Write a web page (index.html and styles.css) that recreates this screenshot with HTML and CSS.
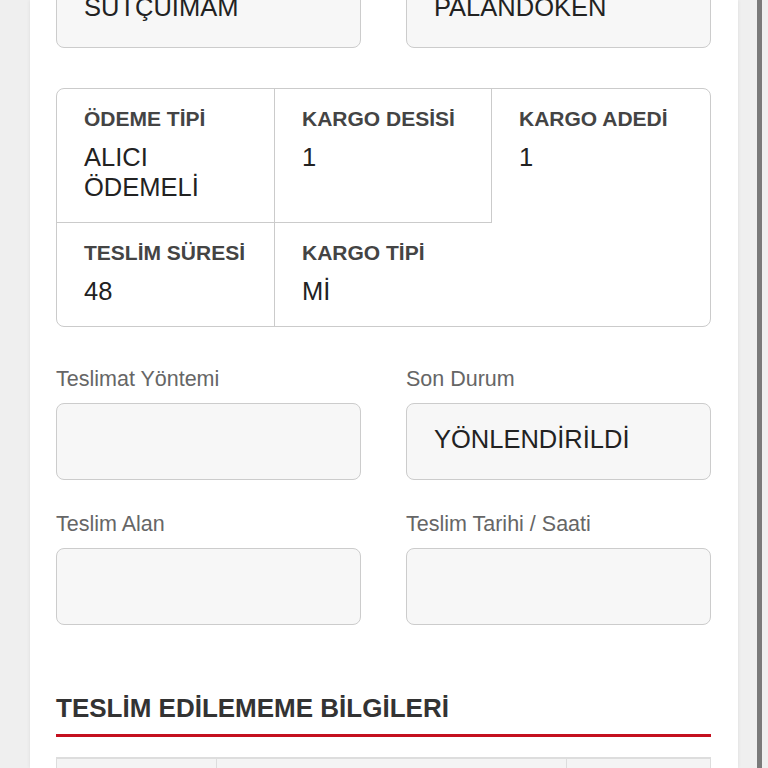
FILE: index.html
```html
<!DOCTYPE html>
<html lang="tr">
<head>
<meta charset="utf-8">
<title>Kargo Takip</title>
<link rel="stylesheet" href="styles.css">
</head>
<body>
<div class="page">
  <div class="gutter-left"></div>
  <main class="panel">
    <div class="row top-row">
      <div class="field">
        <div class="input">SUTÇUIMAM</div>
      </div>
      <div class="field">
        <div class="input">PALANDOKEN</div>
      </div>
    </div>

    <div class="card">
      <div class="cell c-rb">
        <div class="cell-label">ÖDEME TİPİ</div>
        <div class="cell-value">ALICI<br>ÖDEMELİ</div>
      </div>
      <div class="cell c-rb">
        <div class="cell-label">KARGO DESİSİ</div>
        <div class="cell-value">1</div>
      </div>
      <div class="cell c-span">
        <div class="cell-label">KARGO ADEDİ</div>
        <div class="cell-value">1</div>
      </div>
      <div class="cell c-r row2">
        <div class="cell-label">TESLİM SÜRESİ</div>
        <div class="cell-value">48</div>
      </div>
      <div class="cell row2">
        <div class="cell-label">KARGO TİPİ</div>
        <div class="cell-value">Mİ</div>
      </div>
    </div>

    <div class="row labeled-row">
      <div class="field">
        <div class="field-label">Teslimat Yöntemi</div>
        <div class="input"></div>
      </div>
      <div class="field">
        <div class="field-label">Son Durum</div>
        <div class="input">YÖNLENDİRİLDİ</div>
      </div>
    </div>

    <div class="row labeled-row second">
      <div class="field">
        <div class="field-label">Teslim Alan</div>
        <div class="input"></div>
      </div>
      <div class="field">
        <div class="field-label">Teslim Tarihi / Saati</div>
        <div class="input"></div>
      </div>
    </div>

    <h2 class="section-title">TESLİM EDİLEMEME BİLGİLERİ</h2>

    <div class="table">
      <div class="th th-1"></div>
      <div class="th th-2"></div>
      <div class="th th-3"></div>
    </div>
  </main>
  <div class="gutter-right"><div class="rail"></div></div>
</div>
</body>
</html>
```

FILE: styles.css
```css
html, body {
  margin: 0;
  padding: 0;
  background: #efefef;
  height: 768px;
  overflow: hidden;
  font-family: "Liberation Sans", Arial, sans-serif;
}

.page {
  display: flex;
  width: 768px;
  height: 768px;
}

.gutter-left {
  width: 30px;
  flex: none;
}

.panel {
  width: 708px;
  flex: none;
  background: #ffffff;
  box-shadow: 0 0 4px rgba(0, 0, 0, 0.08);
  padding: 0 27px 0 26px;
  box-sizing: border-box;
}

.gutter-right {
  width: 30px;
  flex: none;
  padding-left: 19px;
  box-sizing: border-box;
}

.rail {
  width: 5px;
  height: 100%;
  background: #7a7a7a;
}

.row {
  display: grid;
  grid-template-columns: 305px 305px;
  column-gap: 45px;
}

.top-row {
  margin-top: -29px;
}

.input {
  height: 77px;
  box-sizing: border-box;
  border: 1px solid #cccccc;
  border-radius: 8px;
  background: #f7f7f7;
  padding: 0 27px;
  display: flex;
  align-items: center;
  padding-bottom: 4px;
  font-size: 25.5px;
  color: #222;
}

.field-label {
  font-size: 21.5px;
  line-height: 24px;
  color: #666;
  margin-bottom: 12px;
}

.labeled-row {
  margin-top: 40px;
}

.labeled-row.second {
  margin-top: 32px;
}

.card {
  margin-top: 40px;
  border: 1px solid #cbcbcb;
  border-radius: 8px;
  display: grid;
  grid-template-columns: 218px 217px 218px;
  grid-template-rows: 134px 103px;
}

.cell {
  padding: 18px 10px 0 27px;
  box-sizing: border-box;
}

.c-rb {
  border-right: 1px solid #cbcbcb;
  border-bottom: 1px solid #cbcbcb;
}

.c-r {
  border-right: 1px solid #cbcbcb;
}

.c-span {
  grid-row: 1 / span 2;
  grid-column: 3;
}

.row2 {
  padding-left: 27px;
}

.cell-label {
  font-size: 21px;
  line-height: 24px;
  font-weight: bold;
  color: #444;
  white-space: nowrap;
}

.cell-value {
  margin-top: 11px;
  font-size: 25.5px;
  line-height: 30px;
  color: #222;
}

.section-title {
  margin: 68px 0 0 0;
  font-size: 26px;
  line-height: 30px;
  font-weight: bold;
  color: #333;
  padding-bottom: 11px;
  border-bottom: 3px solid #c4101f;
}

.table {
  margin-top: 20px;
  display: grid;
  grid-template-columns: 160px 350px 145px;
  border-top: 2px solid #dddddd;
}

.th {
  height: 40px;
  background: #f4f4f4;
  border-left: 1px solid #dddddd;
}

.th-3 {
  border-right: 1px solid #dddddd;
}
```
